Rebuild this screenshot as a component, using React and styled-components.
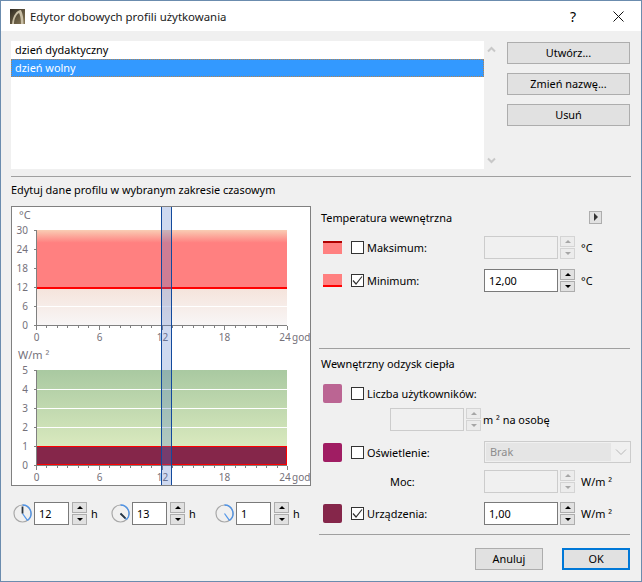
import React from 'react'
import styled, { createGlobalStyle } from 'styled-components'

const Global = createGlobalStyle`
    html, body { margin: 0; padding: 0; background: #f0f0f0; }
    * { box-sizing: border-box; }
`
const Window = styled.div`
    width: 642px;
    height: 582px;
    border: 1px solid #6b8cae;
    background: #f0f0f0;
    font-family: "Noto Sans", "Open Sans", sans-serif;
    font-size: 10.9px;
    color: #000;
    overflow: hidden;
`
const TitleBar = styled.div`
    height: 30px;
    background: #fff;
    display: flex;
    align-items: center;
    padding-left: 9px;
`
const TitleText = styled.div`
    margin-left: 5px;
    font-size: 11.4px;
    color: #1a1a1a;
    flex: 1;
`
const Help = styled.div`
    width: 46px;
    font-size: 14px;
    text-align: center;
`
const CloseBox = styled.div`
    width: 45px;
    height: 30px;
    display: flex;
    align-items: center;
    justify-content: center;
`
const Content = styled.div`
    padding: 10px 0 0 10px;
    width: 630px;
`
const TopRow = styled.div`
    display: grid;
    grid-template-columns: 473px 23px 123px;
    height: 128px;
`
const List = styled.div`
    background: #fff;
`
const ListItem = styled.div`
    height: 18px;
    line-height: 18px;
    padding-left: 4px;
    color: ${p => (p.$selected ? '#fff' : '#000')};
    background: ${p => (p.$selected ? '#3399ff' : '#fff')};
    outline: ${p => (p.$selected ? '1px dotted #b5834f' : 'none')};
    outline-offset: -1px;
`
const ScrollCol = styled.div`
    display: flex;
    flex-direction: column;
    justify-content: space-between;
    align-items: flex-start;
    padding: 5px 0 5px 3px;
`
const ButtonCol = styled.div`
    display: flex;
    flex-direction: column;
    gap: 9px;
    padding-top: 1px;
`
const Button = styled.div`
    width: ${p => p.$width || '100%'};
    height: 22px;
    text-align: center;
    background: #e1e1e1;
    border: ${p => (p.$primary ? '2px solid #0078d7' : '1px solid #adadad')};
    line-height: ${p => (p.$primary ? '18px' : '20px')};
`
const Divider = styled.div`
    height: 1px;
    background: #a0a0a0;
    margin-top: ${p => p.$top || 0}px;
`
const SectionTitle = styled.div`
    height: 16px;
    line-height: 16px;
    margin-top: 5px;
`
const Columns = styled.div`
    display: grid;
    grid-template-columns: 300px 311px;
    column-gap: 8px;
    margin-top: 8px;
`
const ChartBox = styled.div`
    width: 300px;
    height: 280px;
    border: 1px solid #808080;
    background: #fff;
`
const ClockRow = styled.div`
    display: flex;
    align-items: flex-start;
    margin: 16px 0 0 2px;
`
const ClockGroup = styled.div`
    display: flex;
    align-items: center;
    height: 23px;
    width: ${p => p.$width}px;
`
const Field = styled.div`
    width: ${p => p.$width}px;
    height: 23px;
    line-height: 21px;
    padding-left: 4px;
    flex-shrink: 0;
    border: 1px solid ${p => (p.$off ? '#cccccc' : '#7a7a7a')};
    background: ${p => (p.$off ? '#f0f0f0' : '#fff')};
`
const SpinWrap = styled.div`
    display: flex;
    flex-direction: column;
    gap: 1px;
    width: 15px;
    height: 23px;
    flex-shrink: 0;
    margin-left: ${p => p.$left || 2}px;
`
const SpinBtn = styled.div`
    flex: 1;
    display: flex;
    align-items: center;
    justify-content: center;
    background: ${p => (p.$off ? '#ececec' : '#e1e1e1')};
    border: 1px solid ${p => (p.$off ? '#d4d4d4' : '#adadad')};
`
const Arrow = styled.span`
    width: 0;
    height: 0;
    border-left: 3px solid transparent;
    border-right: 3px solid transparent;
    border-${p => (p.$down ? 'top' : 'bottom')}: 3px solid ${p => (p.$off ? '#a6a6a6' : '#000')};
`
const Unit = styled.span`
    margin-left: ${p => p.$left || 6}px;
    white-space: nowrap;
`
const PanelHead = styled.div`
    display: flex;
    justify-content: space-between;
    align-items: center;
    height: 18px;
    margin-top: ${p => p.$top || 0}px;
    padding: 0 28px 0 2px;
`
const PlayBtn = styled.div`
    width: 13px;
    height: 13px;
    background: #e1e1e1;
    border: 1px solid #adadad;
    display: flex;
    align-items: center;
    justify-content: center;
`
const PlayArrow = styled.span`
    width: 0;
    height: 0;
    border-top: 4px solid transparent;
    border-bottom: 4px solid transparent;
    border-left: 4px solid #333;
`
const Row = styled.div`
    display: grid;
    grid-template-columns: 165px auto;
    justify-content: start;
    align-items: center;
    height: ${p => p.$height || 23}px;
    margin-top: ${p => p.$top || 0}px;
`
const Lead = styled.div`
    display: flex;
    align-items: center;
    padding-left: 4px;
    white-space: nowrap;
`
const Swatch = styled.div`
    width: 19px;
    height: ${p => p.$height || 13}px;
    margin-right: 9px;
    flex-shrink: 0;
    background: ${p => p.$color};
    border-radius: ${p => (p.$round ? '2px' : '0')};
    border-top: ${p => (p.$topLine ? `2px solid ${p.$topLine}` : 'none')};
    border-bottom: ${p => (p.$bottomLine ? `2px solid ${p.$bottomLine}` : 'none')};
`
const Check = styled.div`
    width: 13px;
    height: 13px;
    margin-right: 3px;
    flex-shrink: 0;
    background: #fff;
    border: 1px solid #333;
    display: flex;
    align-items: center;
    justify-content: center;
`
const Controls = styled.div`
    display: flex;
    align-items: center;
`
const IndentRow = styled.div`
    display: flex;
    align-items: center;
    height: 23px;
    margin: ${p => p.$top || 0}px 0 0 71px;
`
const MocLabel = styled.div`
    width: 94px;
`
const Select = styled.div`
    width: 147px;
    height: 22px;
    border: 1px solid #cccccc;
    padding: 1px 19px 1px 1px;
    position: relative;
`
const SelectInner = styled.div`
    height: 18px;
    line-height: 18px;
    padding-left: 4px;
    background: #e5e5e5;
    color: #8c8c8c;
`
const SelectArrow = styled.svg`
    position: absolute;
    right: 3px;
    top: 6px;
`
const Footer = styled.div`
    display: flex;
    justify-content: flex-end;
    gap: 19px;
    margin-top: 13px;
`

const AppIcon = () => (
    <svg width="15" height="15" viewBox="0 0 15 15">
        <defs>
            <linearGradient id="logo" x1="0" y1="0" x2="1" y2="1">
                <stop offset="0" stopColor="#2f2a22" />
                <stop offset="1" stopColor="#8a7a58" />
            </linearGradient>
        </defs>
        <rect width="15" height="15" fill="url(#logo)" />
        <path d="M2 15 C3 6 7 1 11 1 C13 5 13.5 10 13.5 15 L11 15 C11 9 10 6 9 4 C6 6 4 10 4 15 Z" fill="#c9bfa6" />
    </svg>
)

const CheckMark = () => (
    <svg width="11" height="11" viewBox="0 0 11 11">
        <path d="M1 5.5 L4 9 L10 1.5" fill="none" stroke="#333" strokeWidth="1.2" />
    </svg>
)

const ChevronSmall = ({ up }) => (
    <svg width="9" height="7" viewBox="0 0 9 7">
        <path d={up ? 'M1 5.5 L4.5 2 L8 5.5' : 'M1 1.5 L4.5 5 L8 1.5'} fill="none" stroke="#c8c8c8" strokeWidth="2" />
    </svg>
)

const Spinner = ({ off, left }) => (
    <SpinWrap $left={left}>
        <SpinBtn $off={off}><Arrow $off={off} /></SpinBtn>
        <SpinBtn $off={off}><Arrow $off={off} $down /></SpinBtn>
    </SpinWrap>
)

// hand angles in degrees from 12 o'clock
const polar = (deg, len) => {
    const r = (deg * Math.PI) / 180
    return [9.5 + len * Math.sin(r), 9.5 - len * Math.cos(r)]
}

const Clock = ({ end, hand }) => {
    const [ex, ey] = polar(end, 8.5)
    const [hx, hy] = polar(hand || 0, 7)
    return (
        <svg width="19" height="19" viewBox="0 0 19 19" style={{ marginRight: 2, flexShrink: 0 }}>
            <circle cx="9.5" cy="9.5" r="8.5" fill="#f0f0f0" stroke="#a8a8a8" strokeWidth="1.2" />
            <path d={`M9.5 1 A8.5 8.5 0 0 1 ${ex} ${ey}`} fill="none" stroke="#4f94e8" strokeWidth="1.3" />
            <line x1="9.5" y1="9.5" x2={ex} y2={ey} stroke="#4f94e8" strokeWidth="1.2" />
            {hand !== null && <line x1="9.5" y1="9.5" x2={hx} y2={hy} stroke="#2b3640" strokeWidth="1.8" />}
        </svg>
    )
}

const AXIS = '#808080'
const LABEL = '#75717a'
const hourX = h => Math.round(36 + (h * 251) / 24) + 0.5

const Axis = ({ y0, labels, step }) => (
    <g>
        <line x1="36.5" y1={y0 - step * (labels.length - 1)} x2="36.5" y2={y0 + 1} stroke={AXIS} />
        <line x1="36" y1={y0 + 0.5} x2="287" y2={y0 + 0.5} stroke={AXIS} />
        {labels.map((l, i) => (
            <g key={l}>
                <line x1="34" x2="36" y1={y0 + 0.5 - i * step} y2={y0 + 0.5 - i * step} stroke={AXIS} />
                <text x="28" y={y0 + 4 - i * step} textAnchor="end" fontSize="10" fill={LABEL}>{l}</text>
            </g>
        ))}
        {Array.from({ length: 25 }, (_, h) => (
            <line key={h} x1={hourX(h)} x2={hourX(h)} y1={y0 + 1} y2={y0 + (h % 6 === 0 ? 5 : 3)} stroke={AXIS} />
        ))}
        {[0, 6, 12, 18, 24].map(h => (
            <text key={h} x={h === 24 ? 285 : hourX(h)} y={y0 + 16} textAnchor="middle" fontSize="10" fill={LABEL}>{h}</text>
        ))}
        <text x="292" y={y0 + 16} fontSize="10" fill={LABEL}>god</text>
    </g>
)

const Chart = () => (
    <svg width="298" height="278" viewBox="12 207 298 278" style={{ display: 'block' }}>
        <defs>
            <linearGradient id="hot" x1="0" y1="0" x2="0" y2="1">
                <stop offset="0" stopColor="#f9cdb4" />
                <stop offset="0.22" stopColor="#ff8080" />
                <stop offset="1" stopColor="#ff8080" />
            </linearGradient>
            <linearGradient id="cold" x1="0" y1="0" x2="0" y2="1">
                <stop offset="0" stopColor="#f5e3db" />
                <stop offset="1" stopColor="#f8f6f6" />
            </linearGradient>
            <linearGradient id="gain" x1="0" y1="0" x2="0" y2="1">
                <stop offset="0" stopColor="#a9c9a1" />
                <stop offset="1" stopColor="#d9e9be" />
            </linearGradient>
        </defs>
        <text x="19" y="219" fontSize="11" fill={LABEL}>°C</text>
        <rect x="36" y="230" width="251" height="58" fill="url(#hot)" />
        <rect x="36" y="288" width="251" height="37" fill="url(#cold)" />
        <line x1="36" x2="287" y1="306.5" y2="306.5" stroke="#fff" />
        <rect x="36" y="287" width="251" height="2" fill="#ff0000" />
        <Axis y0={325} labels={[0, 6, 12, 18, 24, 30]} step={19} />

        <text x="18" y="359" fontSize="11" fill={LABEL}>W/m ²</text>
        <rect x="36" y="370" width="251" height="76" fill="url(#gain)" />
        {[389, 408, 427].map(y => (
            <line key={y} x1="36" x2="287" y1={y + 0.5} y2={y + 0.5} stroke="#fff" />
        ))}
        <rect x="36.5" y="446.5" width="250" height="18" fill="#85264a" stroke="#ff0000" />
        <Axis y0={465} labels={[0, 1, 2, 3, 4, 5]} step={19} />

        <rect x="162" y="207" width="9" height="278" fill="#5078c8" fillOpacity="0.28" />
        <line x1="161.5" x2="161.5" y1="207" y2="485" stroke="#134a9c" />
        <line x1="171.5" x2="171.5" y1="207" y2="485" stroke="#134a9c" />
    </svg>
)

const App = () => (
    <Window>
        <Global />
        <TitleBar>
            <AppIcon />
            <TitleText>Edytor dobowych profili użytkowania</TitleText>
            <Help>?</Help>
            <CloseBox>
                <svg width="11" height="11" viewBox="0 0 11 11">
                    <path d="M0.5 0.5 L10.5 10.5 M10.5 0.5 L0.5 10.5" stroke="#111" strokeWidth="1" />
                </svg>
            </CloseBox>
        </TitleBar>
        <Content>
            <TopRow>
                <List>
                    <ListItem>dzień dydaktyczny</ListItem>
                    <ListItem $selected>dzień wolny</ListItem>
                </List>
                <ScrollCol>
                    <ChevronSmall up />
                    <ChevronSmall />
                </ScrollCol>
                <ButtonCol>
                    <Button>Utwórz...</Button>
                    <Button>Zmień nazwę...</Button>
                    <Button>Usuń</Button>
                </ButtonCol>
            </TopRow>
            <Divider $top={7} />
            <SectionTitle>Edytuj dane profilu w wybranym zakresie czasowym</SectionTitle>
            <Columns>
                <div>
                    <ChartBox><Chart /></ChartBox>
                    <ClockRow>
                        <ClockGroup $width={98}>
                            <Clock end={145} hand={0} />
                            <Field $width={35}>12</Field>
                            <Spinner left={3} />
                            <Unit $left={4}>h</Unit>
                        </ClockGroup>
                        <ClockGroup $width={104}>
                            <Clock end={135} hand={135} />
                            <Field $width={35}>13</Field>
                            <Spinner left={3} />
                            <Unit $left={4}>h</Unit>
                        </ClockGroup>
                        <ClockGroup $width={94}>
                            <Clock end={145} hand={null} />
                            <Field $width={35}>1</Field>
                            <Spinner left={3} />
                            <Unit $left={4}>h</Unit>
                        </ClockGroup>
                    </ClockRow>
                </div>
                <div>
                    <PanelHead $top={2}>
                        Temperatura wewnętrzna
                        <PlayBtn><PlayArrow /></PlayBtn>
                    </PanelHead>
                    <Row $top={10}>
                        <Lead>
                            <Swatch $color="#ff8080" $topLine="#b00000" />
                            <Check />
                            Maksimum:
                        </Lead>
                        <Controls>
                            <Field $width={74} $off />
                            <Spinner off />
                            <Unit>°C</Unit>
                        </Controls>
                    </Row>
                    <Row $top={10}>
                        <Lead>
                            <Swatch $color="#ff8080" $bottomLine="#ff0000" />
                            <Check><CheckMark /></Check>
                            Minimum:
                        </Lead>
                        <Controls>
                            <Field $width={74}>12,00</Field>
                            <Spinner />
                            <Unit>°C</Unit>
                        </Controls>
                    </Row>
                    <Divider $top={56} />
                    <PanelHead $top={5}>Wewnętrzny odzysk ciepła</PanelHead>
                    <Row $top={10} $height={22}>
                        <Lead>
                            <Swatch $color="#bb6593" $height={19} $round />
                            <Check />
                            Liczba użytkowników:
                        </Lead>
                    </Row>
                    <IndentRow $top={4}>
                        <Field $width={74} $off />
                        <Spinner off />
                        <Unit $left={2}>m ² na osobę</Unit>
                    </IndentRow>
                    <Row $top={10} $height={22}>
                        <Lead>
                            <Swatch $color="#a01d63" $height={19} $round />
                            <Check />
                            Oświetlenie:
                        </Lead>
                        <Select>
                            <SelectInner>Brak</SelectInner>
                            <SelectArrow width="12" height="8" viewBox="0 0 12 8">
                                <path d="M1 1.5 L6 6.5 L11 1.5" fill="none" stroke="#b8b8b8" />
                            </SelectArrow>
                        </Select>
                    </Row>
                    <IndentRow $top={7}>
                        <MocLabel>Moc:</MocLabel>
                        <Field $width={74} $off />
                        <Spinner off />
                        <Unit>W/m ²</Unit>
                    </IndentRow>
                    <Row $top={9}>
                        <Lead>
                            <Swatch $color="#85264a" $height={19} $round />
                            <Check><CheckMark /></Check>
                            Urządzenia:
                        </Lead>
                        <Controls>
                            <Field $width={74}>1,00</Field>
                            <Spinner />
                            <Unit>W/m ²</Unit>
                        </Controls>
                    </Row>
                    <Divider $top={9} />
                    <Footer>
                        <Button $width="68px">Anuluj</Button>
                        <Button $width="68px" $primary>OK</Button>
                    </Footer>
                </div>
            </Columns>
        </Content>
    </Window>
)

export default App
